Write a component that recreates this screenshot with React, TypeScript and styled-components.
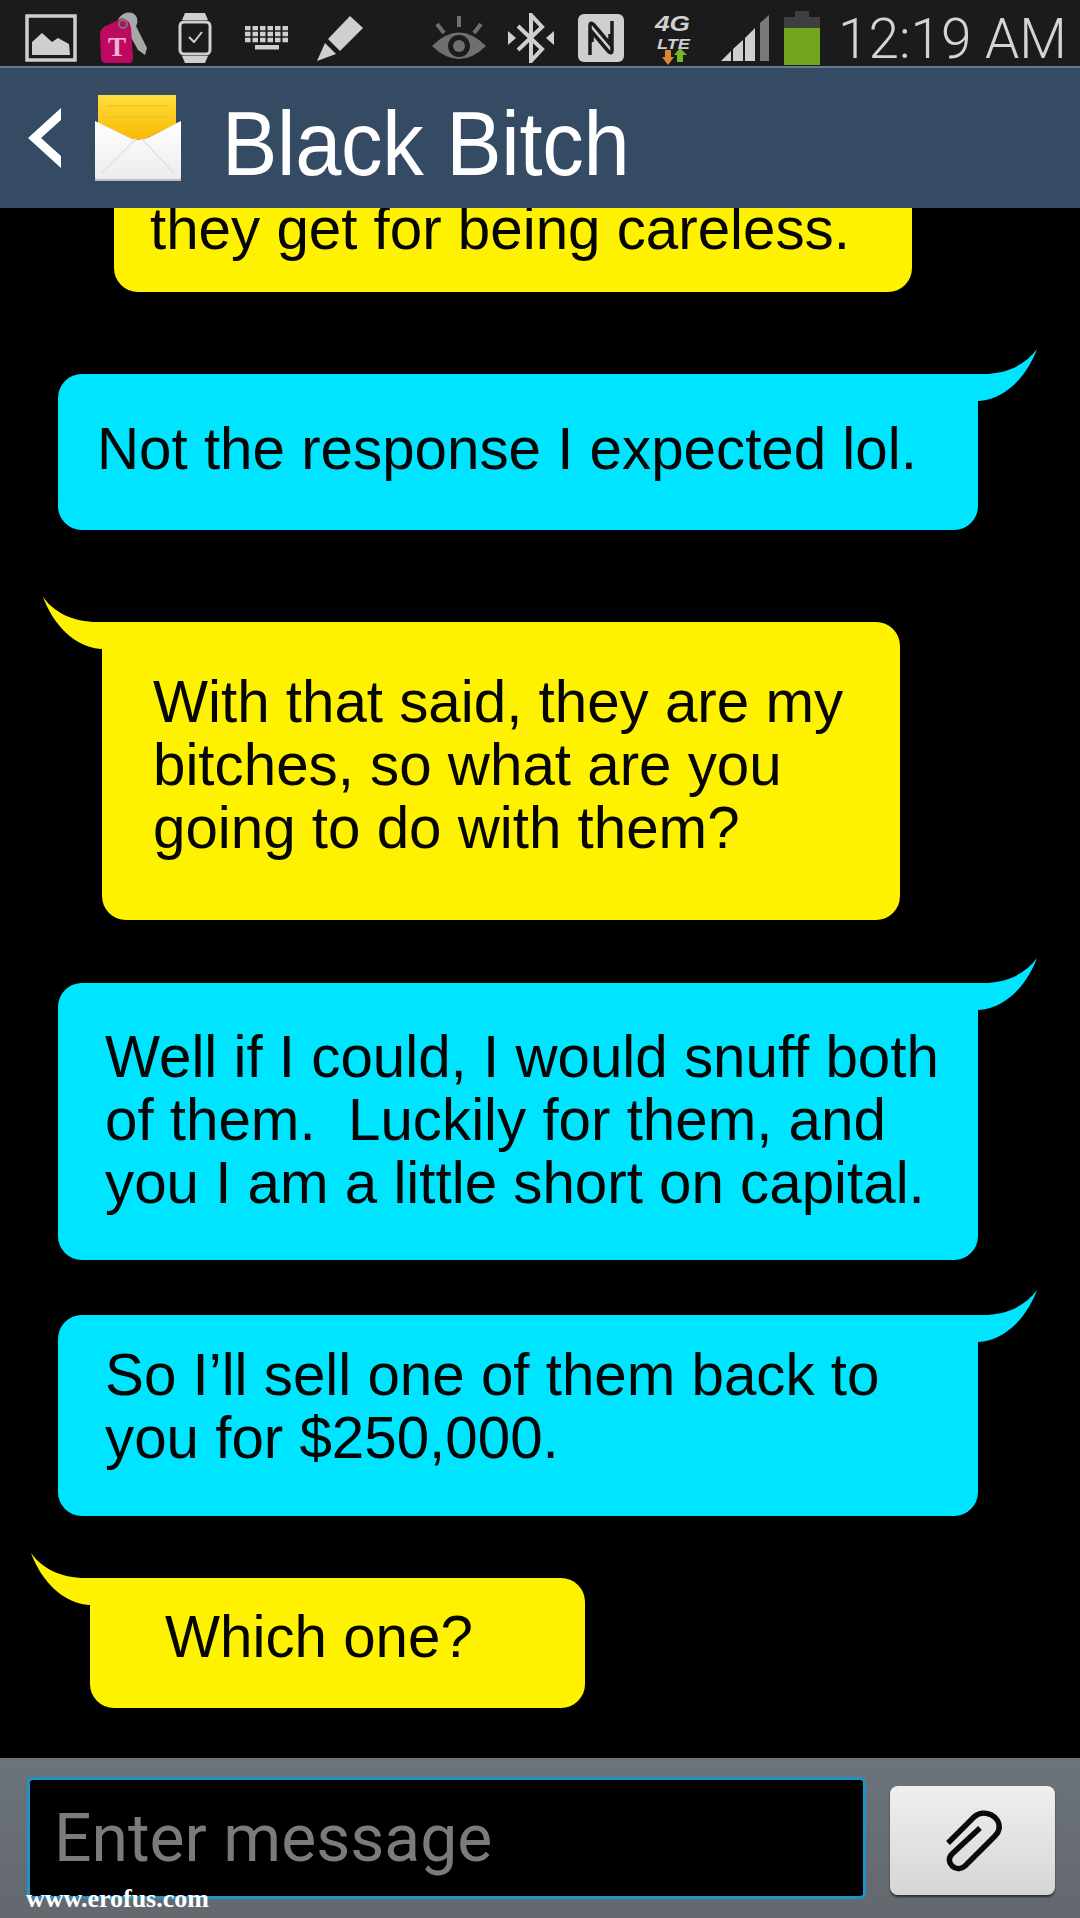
import styled, { createGlobalStyle } from "styled-components";

const GlobalStyle = createGlobalStyle`
  html, body {
    margin: 0;
    padding: 0;
    background: #000;
  }
`;

const Phone = styled.div`
  position: relative;
  width: 1080px;
  height: 1918px;
  display: flex;
  flex-direction: column;
  overflow: hidden;
  font-family: "Liberation Sans", Arial, sans-serif;
`;

const StatusBar = styled.div`
  height: 66px;
  flex: none;
  display: flex;
  align-items: center;
  box-sizing: border-box;
  padding: 9px 0 0 25px;
  background: #1b1b1b;
`;

const StatusIcon = styled.svg<{ $left: number }>`
  flex: none;
  display: block;
  margin-left: ${(p) => p.$left}px;
`;

const Clock = styled.div`
  margin-left: 18px;
  padding-top: 4px;
  font-family: Roboto, "Liberation Sans", sans-serif;
  font-weight: 300;
  font-size: 55px;
  line-height: 57px;
  color: #d4d4d4;
  white-space: nowrap;
`;

const Header = styled.div`
  height: 142px;
  flex: none;
  display: flex;
  align-items: center;
  padding-left: 28px;
  box-sizing: border-box;
  background: #344b63;
  border-top: 2px solid #5f7a93;
  z-index: 1;
`;

const Title = styled.div`
  margin-left: 38px;
  padding-top: 12px;
  font-size: 83px;
  letter-spacing: -0.3px;
  line-height: 100px;
  color: #fff;
  white-space: nowrap;
  transform: scaleY(1.1);
`;

const Chat = styled.div`
  flex: 1;
  min-height: 0;
  display: flex;
  flex-direction: column;
  justify-content: flex-end;
  align-items: flex-start;
  padding-bottom: 50px;
  background: #000;
`;

const Bubble = styled.div<{
  $kind: "in" | "out";
  $left: number;
  $width: number;
  $top: number;
  $pad: string;
}>`
  position: relative;
  flex: none;
  box-sizing: border-box;
  width: ${(p) => p.$width}px;
  margin-left: ${(p) => p.$left}px;
  margin-top: ${(p) => p.$top}px;
  padding: ${(p) => p.$pad};
  border-radius: 24px;
  background: ${(p) => (p.$kind === "in" ? "#fff200" : "#00e5ff")};
  color: #050505;
  font-size: 58.3px;
  line-height: 63px;
  white-space: pre;
`;

const OutTail = styled.svg`
  position: absolute;
  top: -26px;
  right: -60px;
`;

const InTail = styled.svg`
  position: absolute;
  top: -26px;
  left: -60px;
`;

const InputBar = styled.div`
  height: 160px;
  flex: none;
  display: flex;
  align-items: flex-start;
  padding: 19px 25px 0 27px;
  box-sizing: border-box;
  background: linear-gradient(#6d737a, #63686f);
`;

const MessageField = styled.div`
  width: 839px;
  height: 122px;
  box-sizing: border-box;
  padding-left: 24px;
  display: flex;
  align-items: center;
  background: #000;
  border: 3px solid #1f93c2;
  border-radius: 6px;
  font-family: Roboto, "Liberation Sans", sans-serif;
  font-size: 66px;
  color: #7b7b7b;
`;

const AttachButton = styled.button`
  width: 165px;
  height: 109px;
  margin: 9px 0 0 24px;
  padding: 0;
  display: flex;
  align-items: center;
  justify-content: center;
  background: linear-gradient(#efefef, #d6d6d6);
  border: 0;
  border-radius: 8px;
  box-shadow: 0 2px 2px rgba(0, 0, 0, 0.55);
`;

const Watermark = styled.div`
  position: absolute;
  left: 26px;
  bottom: 6px;
  font-family: "Liberation Serif", serif;
  font-weight: 700;
  font-size: 26px;
  line-height: 26px;
  color: #fff;
`;

const statusGrey = "#cfcfcf";

function OutgoingTail() {
  return (
    <OutTail width="84" height="54" viewBox="0 0 84 54">
      <path d="M0 26 H28 C54 26 72 16 83 1 C76 20 58 50 25 53 H0 Z" fill="#00e5ff" />
    </OutTail>
  );
}

function IncomingTail() {
  return (
    <InTail width="84" height="54" viewBox="0 0 84 54">
      <path d="M84 26 H56 C30 26 12 16 1 1 C8 20 26 50 59 53 H84 Z" fill="#fff200" />
    </InTail>
  );
}

function Envelope() {
  return (
    <StatusIcon $left={32} width="90" height="90" viewBox="0 0 90 90">
      <defs>
        <linearGradient id="sheet" x1="0" y1="0" x2="0" y2="1">
          <stop offset="0" stopColor="#ffde3d" />
          <stop offset="1" stopColor="#f9b800" />
        </linearGradient>
        <linearGradient id="env" x1="0" y1="0" x2="0" y2="1">
          <stop offset="0" stopColor="#ffffff" />
          <stop offset="1" stopColor="#ececec" />
        </linearGradient>
      </defs>
      <path d="M4 2 H82 V48 L44 46 L4 48 Z" fill="url(#sheet)" />
      <path d="M12 13 H74 M12 24 H74" stroke="#f2c41c" strokeWidth="1.5" />
      <path d="M1 28 L38 45 Q44 47 50 45 L87 28 V84 Q87 88 83 88 H5 Q1 88 1 84 Z" fill="url(#env)" />
      <path d="M1 28 L34 44 Q44 50 56 44 L87 28 L50 45 Q44 47 38 45 Z" fill="#e8a400" />
      <path d="M8 80 L42 46 M80 80 L48 46" stroke="#e2e2e2" strokeWidth="1.5" fill="none" />
      <path d="M1 87 H87" stroke="#bdbdbd" strokeWidth="2" />
    </StatusIcon>
  );
}

export default function App() {
  return (
    <Phone>
      <GlobalStyle />
      <StatusBar>
        {/* picture */}
        <StatusIcon $left={0} width="52" height="48" viewBox="0 0 52 48">
          <rect x="2" y="2" width="48" height="44" fill="none" stroke={statusGrey} strokeWidth="3.5" />
          <path d="M7 41 V28 L17 19 L27 28 L33 24 L44 30 L45 41 Z" fill={statusGrey} />
        </StatusIcon>
        {/* t-mobile key tag */}
        <StatusIcon $left={23} width="50" height="52" viewBox="0 0 50 52">
          <path d="M18 8 C22 -1 34 -2 37 6 C38 10 37 12 36 14 L47 36 L45 43 L38 38 L27 18 Z" fill="#a8a8a8" />
          <path d="M0 22 Q1 15 8 13 L22 6 Q30 8 31 16 L33 46 Q33 51 29 51 H6 Q1 51 1 46 Z" fill="#bd0a60" />
          <circle cx="23" cy="12" r="4" fill="none" stroke="#777" strokeWidth="2" />
          <text x="17" y="44" textAnchor="middle" fontFamily="Liberation Serif, serif" fontWeight="700" fontSize="27" fill="#efb4d0">T</text>
        </StatusIcon>
        {/* watch */}
        <StatusIcon $left={28} width="34" height="50" viewBox="0 0 34 50">
          <path d="M7 0 H27 L30 7 H4 Z M4 43 H30 L27 50 H7 Z" fill={statusGrey} />
          <rect x="2" y="9" width="30" height="32" rx="4" fill="none" stroke={statusGrey} strokeWidth="3" />
          <path d="M11 24 L16 29 L24 19" fill="none" stroke={statusGrey} strokeWidth="2" />
        </StatusIcon>
        {/* keyboard */}
        <StatusIcon $left={33} width="44" height="24" viewBox="0 0 44 24">
          <path
            d="M0 2 H44 M0 8 H44 M0 14 H44"
            stroke={statusGrey}
            strokeWidth="4.5"
            strokeDasharray="5.5 2"
            fill="none"
          />
          <rect x="10" y="19" width="24" height="4.5" fill={statusGrey} />
        </StatusIcon>
        {/* pen */}
        <StatusIcon $left={28} width="46" height="46" viewBox="0 0 46 46">
          <path d="M11 24 L33 1 L46 13 L23 36 Z" fill={statusGrey} />
          <path d="M8 28 L19 39 L0 46 Z" fill={statusGrey} />
        </StatusIcon>
        {/* eye */}
        <StatusIcon $left={69} width="54" height="44" viewBox="0 0 54 44">
          <path d="M27 0 V11 M5 8 L12 17 M49 8 L42 17" stroke="#6f6f6f" strokeWidth="4" />
          <path d="M0 30 Q27 3 54 30 Q27 56 0 30 Z" fill="#6f6f6f" />
          <circle cx="27" cy="30" r="11" fill="#1b1b1b" />
          <circle cx="27" cy="30" r="6" fill="#6f6f6f" />
        </StatusIcon>
        {/* bluetooth */}
        <StatusIcon $left={21} width="48" height="50" viewBox="0 0 48 50">
          <path d="M11 13 L35 36 L24 48 V2 L35 14 L11 37" fill="none" stroke={statusGrey} strokeWidth="4" />
          <path d="M1 18 L9 25 L1 32 Z M47 18 L39 25 L47 32 Z" fill={statusGrey} />
        </StatusIcon>
        {/* nfc */}
        <StatusIcon $left={23} width="46" height="48" viewBox="0 0 46 48">
          <rect width="46" height="48" rx="6" fill={statusGrey} />
          <path d="M12 41 V12 Q12 7 16 11 L32 30 V20" fill="none" stroke="#1b1b1b" strokeWidth="3.5" />
          <path d="M34 7 V36 Q34 41 30 37 L14 18 V28" fill="none" stroke="#1b1b1b" strokeWidth="3.5" />
        </StatusIcon>
        {/* 4G LTE */}
        <StatusIcon $left={29} width="38" height="54" viewBox="0 0 38 54">
          <text x="2" y="20" textLength="35" lengthAdjust="spacingAndGlyphs" fontFamily="Liberation Sans, sans-serif" fontWeight="700" fontStyle="italic" fontSize="22" fill={statusGrey}>4G</text>
          <text x="4" y="38" textLength="33" lengthAdjust="spacingAndGlyphs" fontFamily="Liberation Sans, sans-serif" fontWeight="700" fontStyle="italic" fontSize="15" fill={statusGrey}>LTE</text>
          <path d="M12 39 H18 V46 H21 L15 54 L9 46 H12 Z" fill="#d8892c" />
          <path d="M27 37 L34 44 H30 V51 H24 V44 H21 Z" fill="#76b82a" />
        </StatusIcon>
        {/* signal */}
        <StatusIcon $left={30} width="48" height="48" viewBox="0 0 48 48">
          <path d="M0 47 L10 37 V47 Z M12 35 L22 26 V47 H12 Z M24 24 L34 14 V47 H24 Z" fill={statusGrey} />
          <path d="M39 9 L48 1 V47 H39 Z" fill="#7a7a7a" />
        </StatusIcon>
        {/* battery */}
        <StatusIcon $left={15} width="36" height="54" viewBox="0 0 36 54">
          <rect x="11" y="0" width="14" height="7" fill="#3f3f3f" />
          <rect x="0" y="6" width="36" height="11" fill="#3f3f3f" />
          <rect x="0" y="17" width="36" height="37" fill="#72a51e" />
        </StatusIcon>
        <Clock>12:19 AM</Clock>
      </StatusBar>

      <Header>
        <StatusIcon $left={0} width="34" height="60" viewBox="0 0 34 60">
          <path d="M33 0 V12 L13 30 L33 48 V60 L0 30 Z" fill="#fff" />
        </StatusIcon>
        <Envelope />
        <Title>Black Bitch</Title>
      </Header>

      <Chat>
        <Bubble $kind="in" $left={114} $width={798} $top={0} $pad="20px 0 32px 36px">
          they get for being careless.
        </Bubble>
        <Bubble $kind="out" $left={58} $width={920} $top={82} $pad="43px 0 50px 39px">
          <OutgoingTail />
          Not the response I expected lol.
        </Bubble>
        <Bubble $kind="in" $left={102} $width={798} $top={92} $pad="48px 0 61px 51px">
          <IncomingTail />
          {"With that said, they are my\nbitches, so what are you\ngoing to do with them?"}
        </Bubble>
        <Bubble $kind="out" $left={58} $width={920} $top={63} $pad="42px 0 46px 47px">
          <OutgoingTail />
          {"Well if I could, I would snuff both\nof them.  Luckily for them, and\nyou I am a little short on capital."}
        </Bubble>
        <Bubble $kind="out" $left={58} $width={920} $top={55} $pad="28px 0 47px 47px">
          <OutgoingTail />
          {"So I\u2019ll sell one of them back to\nyou for $250,000."}
        </Bubble>
        <Bubble $kind="in" $left={90} $width={495} $top={62} $pad="27px 0 40px 75px">
          <IncomingTail />
          Which one?
        </Bubble>
      </Chat>

      <InputBar>
        <MessageField>Enter message</MessageField>
        <AttachButton>
          <svg width="60" height="66" viewBox="0 0 60 66">
            <path
              d="M5 35 L31 9 C41 0 58 8 56 21 C55.5 24 54 26 52 28 L22 58 C13 66 1 54 9 46 L37 20"
              fill="none"
              stroke="#0a0a0a"
              strokeWidth="5.5"
            />
          </svg>
        </AttachButton>
      </InputBar>
      <Watermark>www.erofus.com</Watermark>
    </Phone>
  );
}
